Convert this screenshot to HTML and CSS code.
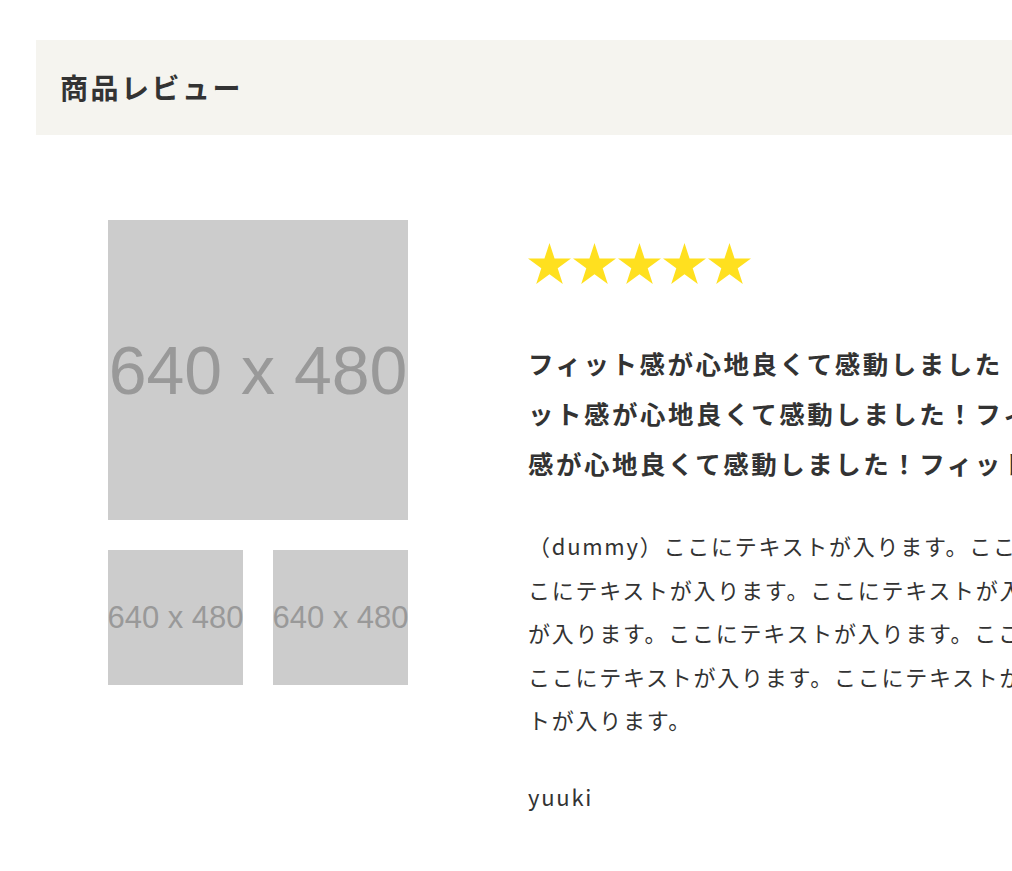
FILE: index.html
```html
<!DOCTYPE html>
<html>
<head>
<meta charset="utf-8">
<title>商品レビュー</title>
<link rel="stylesheet" href="styles.css">
</head>
<body>
<div class="page">
  <h2 class="section-title">商品レビュー</h2>
  <div class="review">
    <div class="gallery">
      <div class="ph ph-main"><span>640 x 480</span></div>
      <div class="thumbs">
        <div class="ph ph-thumb"><span>640 x 480</span></div>
        <div class="ph ph-thumb"><span>640 x 480</span></div>
      </div>
    </div>
    <div class="review-body">
      <div class="stars">
        <svg class="star" viewBox="0 0 43 41"><polygon points="21.5,0 26.57,15.62 43,15.62 29.71,25.27 34.78,40.88 21.5,31.23 8.22,40.88 13.29,25.27 0,15.62 16.43,15.62"/></svg>
        <svg class="star" viewBox="0 0 43 41"><polygon points="21.5,0 26.57,15.62 43,15.62 29.71,25.27 34.78,40.88 21.5,31.23 8.22,40.88 13.29,25.27 0,15.62 16.43,15.62"/></svg>
        <svg class="star" viewBox="0 0 43 41"><polygon points="21.5,0 26.57,15.62 43,15.62 29.71,25.27 34.78,40.88 21.5,31.23 8.22,40.88 13.29,25.27 0,15.62 16.43,15.62"/></svg>
        <svg class="star" viewBox="0 0 43 41"><polygon points="21.5,0 26.57,15.62 43,15.62 29.71,25.27 34.78,40.88 21.5,31.23 8.22,40.88 13.29,25.27 0,15.62 16.43,15.62"/></svg>
        <svg class="star" viewBox="0 0 43 41"><polygon points="21.5,0 26.57,15.62 43,15.62 29.71,25.27 34.78,40.88 21.5,31.23 8.22,40.88 13.29,25.27 0,15.62 16.43,15.62"/></svg>
      </div>
      <h3 class="review-title">フィット感が心地良くて感動しました！フィット感が心地良くて感動しました！フィット感が心地良くて感動しました！フィット感が心地良くて感動しました！フィット感が心地良くて感動しました！フィット感が心地良くて感動しました！</h3>
      <p class="review-text">（dummy）ここにテキストが入ります。ここにテキストが入ります。ここにテキストが入ります。ここにテキストが入ります。ここにテキストが入ります。ここにテキストが入ります。ここにテキストが入ります。ここにテキストが入ります。ここにテキストが入ります。ここにテキストが入ります。ここにテキストが入ります。ここにテキストが入ります。ここにテキストが入ります。ここにテキストが入ります。</p>
      <p class="reviewer">yuuki</p>
    </div>
  </div>
</div>
</body>
</html>
```
FILE: styles.css
```css
html, body {
  margin: 0;
  padding: 0;
  background: #ffffff;
}
body {
  overflow: hidden;
  font-family: "Noto Sans CJK JP", "Noto Sans", sans-serif;
  color: #333333;
  line-break: normal;
}
.page {
  width: fit-content;
  padding: 40px 36px;
}
.section-title {
  margin: 0;
  background: #f5f4ef;
  padding: 28px 24px;
  font-size: 28px;
  line-height: 39px;
  letter-spacing: 2.5px;
  font-weight: 700;
}
.review {
  display: flex;
  gap: 120px;
  margin: 85px 0 0 72px;
}
.gallery {
  flex: 0 0 300px;
  display: flex;
  flex-direction: column;
  gap: 30px;
}
.thumbs {
  display: flex;
  gap: 30px;
}
.ph {
  background: #cccccc;
  color: #999999;
  font-family: "Liberation Sans", Arial, sans-serif;
  display: flex;
  align-items: center;
  justify-content: center;
  overflow: hidden;
  white-space: nowrap;
}
.ph-main {
  width: 300px;
  height: 300px;
  font-size: 68px;
}
.ph-thumb {
  width: 135px;
  height: 135px;
  font-size: 31px;
}
.review-body {
  flex: 0 0 1078px;
  padding-top: 23px;
}
.stars {
  display: flex;
  gap: 2px;
  height: 41px;
}
.star {
  width: 43px;
  height: 41px;
  fill: #ffe01f;
}
.review-title {
  margin: 54px 0 0;
  font-size: 25.5px;
  letter-spacing: 2.5px;
  line-height: 50px;
  font-weight: 700;
}
.review-text {
  margin: 36px 0 0;
  font-size: 22px;
  letter-spacing: 1.75px;
  line-height: 43.5px;
}
.reviewer {
  margin: 33px 0 0;
  font-size: 22px;
  letter-spacing: 1.75px;
  line-height: 43.5px;
}
```
